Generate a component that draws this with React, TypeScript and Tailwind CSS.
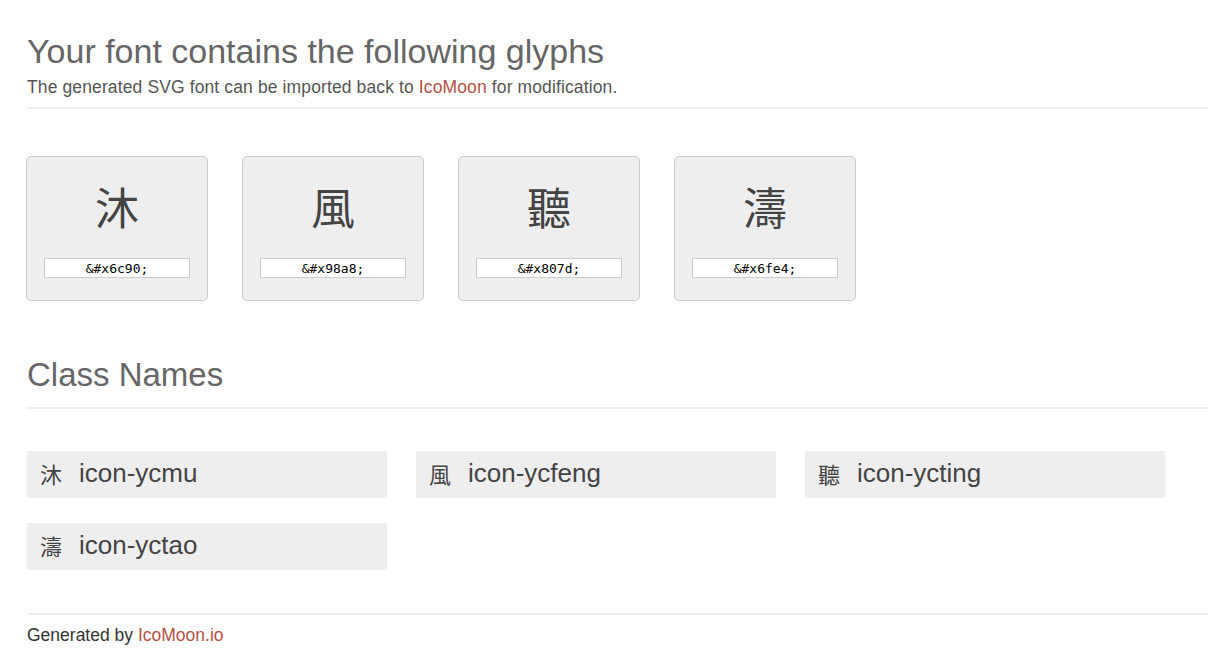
const GLYPHS = [
  { char: "沐", code: "&#x6c90;", name: "icon-ycmu" },
  { char: "風", code: "&#x98a8;", name: "icon-ycfeng" },
  { char: "聽", code: "&#x807d;", name: "icon-ycting" },
  { char: "濤", code: "&#x6fe4;", name: "icon-yctao" },
];

const cjk = "font-['Noto_Sans_CJK_TC',serif]";

export default function App() {
  return (
    <div className="min-h-screen bg-white pl-[27px] font-['Liberation_Sans',Arial,sans-serif] text-[#555]">
      {/* Header */}
      <header className="border-b-2 border-[#eee] pt-[34px] pb-[11px]">
        <h1 className="h-[34px] text-[34px] leading-[34px] font-normal text-[#666]">
          Your font contains the following glyphs
        </h1>
        <p className="mt-[10px] text-[17.5px] leading-[18px] tracking-[0.12px]">
          The generated SVG font can be imported back to{" "}
          <a href="#" className="text-[#b35047]">IcoMoon</a> for modification.
        </p>
      </header>

      {/* Glyph cards */}
      <div className="ml-[-1px] mt-[47px] flex gap-[34px]">
        {GLYPHS.map((g) => (
          <div
            key={g.code}
            className="flex h-[145px] w-[182px] flex-col items-center rounded-[5px] border border-[#ccc] bg-[#eee] pt-[27px]"
          >
            <div className={`h-[44px] text-[44px] leading-[44px] text-[#444] ${cjk}`}>{g.char}</div>
            <input
              readOnly
              value={g.code}
              className="mt-[30px] h-[20px] w-[146px] border border-[#ccc] bg-white text-center font-['DejaVu_Sans_Mono',monospace] text-[13px] text-black outline-none"
            />
          </div>
        ))}
      </div>

      {/* Class names */}
      <section className="mt-[57px] border-b-2 border-[#eee] pb-[15px]">
        <h1 className="h-[34px] text-[33px] leading-[34px] font-normal text-[#666]">Class Names</h1>
      </section>

      <div className="mt-[42px] grid grid-cols-[repeat(3,360px)] gap-x-[29px] gap-y-[25px]">
        {GLYPHS.map((g) => (
          <div key={g.name} className="flex h-[47px] items-center bg-[#eee] pb-[3px] pl-[13px]">
            <span className={`w-[22px] text-[22px] leading-[22px] text-[#444] ${cjk}`}>{g.char}</span>
            <span className="ml-[17px] text-[26px] leading-[30px] text-[#444]">{g.name}</span>
          </div>
        ))}
      </div>

      {/* Footer */}
      <footer className="mt-[43px] border-t-2 border-[#eee] pt-[11px] pb-[20px]">
        <p className="text-[17.5px] leading-[18px] text-[#333]">
          Generated by <a href="#" className="text-[#b35047]">IcoMoon.io</a>
        </p>
      </footer>
    </div>
  );
}
